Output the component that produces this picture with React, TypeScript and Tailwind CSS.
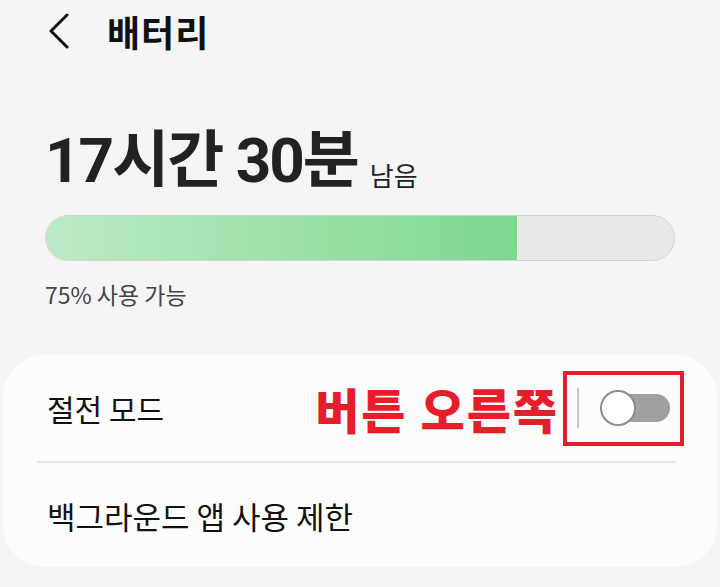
const font = { fontFamily: '"Noto Sans CJK KR", "Noto Sans", sans-serif' };

const App = () => {
  return (
    <div className="w-[720px] h-[587px] bg-[#f5f5f5] overflow-hidden text-[#111]" style={font}>
      {/* Header */}
      <div className="flex items-center h-[62px] pl-[48px]">
        <svg width="22" height="36" viewBox="0 0 22 36" className="shrink-0">
          <path d="M19 2 L3 18 L19 34" fill="none" stroke="#111" strokeWidth="3" strokeLinecap="round" strokeLinejoin="round" />
        </svg>
        <h1 className="ml-[37px] text-[36px] font-bold leading-none tracking-[1px]">배터리</h1>
      </div>

      {/* Remaining time */}
      <div className="px-[45px] pt-[68px]">
        <div className="flex items-end leading-none">
          <span className="text-[62px] font-bold tracking-[-2px] text-[#222]" style={{ fontFamily: 'Roboto, "Noto Sans CJK KR", sans-serif' }}>
            17시간 30분
          </span>
          <span className="ml-[12px] mb-[4px] text-[26px] text-[#222]">남음</span>
        </div>

        {/* Progress */}
        <div className="mt-[23px] h-[46px] rounded-full bg-[#e9e9e9] border border-[#d4d4d4] overflow-hidden">
          <div className="h-full w-[75%] bg-gradient-to-r from-[#bbeac6] to-[#7dd88f]" />
        </div>

        <p className="mt-[22px] text-[23px] text-[#444] leading-none">75% 사용 가능</p>
      </div>

      {/* Card */}
      <div className="mx-[3px] mt-[49px] rounded-[42px] bg-[#fcfcfc] pl-[34px] pr-[41px]">
        <div className="flex items-center h-[106px] pl-[10px]">
          <span className="text-[30px] leading-none">절전 모드</span>
          <span className="ml-auto text-[48px] font-black text-[#e61e2b] leading-none tracking-[2px]">버튼 오른쪽</span>
          <div className="ml-[4px] mr-[-8px] flex items-center h-[75px] w-[121px] border-[4px] border-[#e61e2b]">
            <div className="ml-[10px] w-[2px] h-[40px] bg-[#c8c8c8]" />
            <div className="relative ml-[21px] w-[70px] h-[36px]">
              <div className="absolute left-[16px] right-0 top-[4px] bottom-[4px] rounded-full bg-[#a0a0a0]" />
              <div className="absolute left-0 top-0 w-[36px] h-[36px] rounded-full bg-white border-2 border-[#8c8c8c]" />
            </div>
          </div>
        </div>
        <div className="h-[2px] bg-[#e6e6e6]" />
        <div className="flex items-center h-[104px] pl-[10px]">
          <span className="text-[31px] leading-none">백그라운드 앱 사용 제한</span>
        </div>
      </div>
    </div>
  );
};

export default App;
